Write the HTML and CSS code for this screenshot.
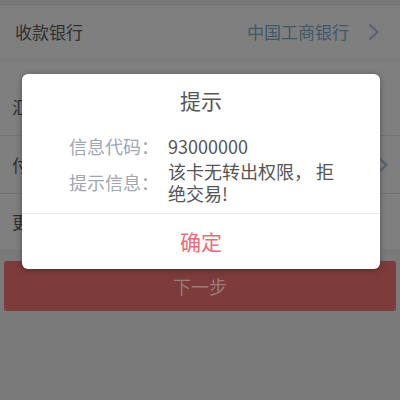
FILE: index.html
```html
<!DOCTYPE html>
<html lang="zh-CN">
<head>
  <meta charset="UTF-8">
  <title>转账</title>
  <link rel="stylesheet" href="styles.css">
</head>
<body>

  <div class="page">
    <div class="top-strip"></div>

    <div class="row row-bank">
      <span class="row-label">收款银行</span>
      <span class="row-value">中国工商银行</span>
      <svg class="chevron" width="12" height="18" viewBox="0 0 12 18">
        <path d="M1.5 1.5 L9.5 9 L1.5 16.5" fill="none" stroke="#56636e" stroke-width="2"/>
      </svg>
    </div>

    <div class="group">
      <div class="row row-amount">
        <span class="row-label">汇款金额</span>
      </div>
      <div class="row row-account">
        <span class="row-label">付款账户</span>
        <svg class="chevron chevron-far" width="12" height="18" viewBox="0 0 12 18">
          <path d="M1.5 1.5 L9.5 9 L1.5 16.5" fill="none" stroke="#56636e" stroke-width="2"/>
        </svg>
      </div>
      <div class="row row-note">
        <span class="row-label">更多信息</span>
      </div>
    </div>

    <div class="btn-next">下一步</div>
  </div>

  <div class="dialog">
    <div class="dialog-title">提示</div>
    <div class="dialog-body">
      <div class="info-row">
        <span class="info-label">信息代码：</span>
        <span class="info-value">93000000</span>
      </div>
      <div class="info-row">
        <span class="info-label">提示信息：</span>
        <span class="info-value">该卡无转出权限， 拒绝交易!</span>
      </div>
    </div>
    <div class="dialog-btn">确定</div>
  </div>

</body>
</html>
```

FILE: styles.css
```css
body {
  margin: 0;
  width: 400px;
  height: 400px;
  overflow: hidden;
  background: #7a7a7a;
  font-family: "Noto Sans CJK SC", "Noto Sans", sans-serif;
  position: relative;
}

.top-strip {
  height: 4px;
  background: #787878;
  border-bottom: 1px solid #717171;
}

.row {
  display: flex;
  align-items: center;
  padding: 0 15px;
  background: #7f7f7f;
  font-size: 17px;
  color: #2f2f2f;
}

.row-bank {
  height: 53px;
  padding-right: 20px;
}

.row-value {
  margin-left: auto;
  color: #3e586a;
}

.chevron {
  margin-left: 19px;
}

.chevron-far {
  margin-left: auto;
  margin-right: -4px;
}

.group {
  margin-top: 4px;
}

.row-amount {
  height: 74px;
  border-bottom: 1px solid #747474;
  padding-top: 16px;
  box-sizing: border-box;
  padding-left: 12px;
}

.row-account {
  height: 57px;
  border-bottom: 1px solid #747474;
  padding-left: 12px;
}

.row-note {
  height: 55px;
  padding-left: 12px;
}

.btn-next {
  margin: 12px 4px 0;
  height: 50px;
  line-height: 50px;
  border-radius: 3px;
  background: #7d3b3b;
  color: #9a7d7d;
  text-align: center;
  font-size: 18px;
}

.dialog {
  position: absolute;
  left: 22px;
  top: 74px;
  width: 358px;
  background: #fff;
  border-radius: 6px;
  box-shadow: 0 1px 6px rgba(0, 0, 0, 0.35);
}

.dialog-title {
  padding-top: 11px;
  line-height: 30px;
  text-align: center;
  font-size: 21px;
  color: #555;
}

.dialog-body {
  padding: 20px 35px 9px 47px;
}

.info-row {
  display: flex;
  align-items: center;
  margin-bottom: 3px;
  font-size: 18px;
  line-height: 22px;
}

.info-row:last-child {
  margin-bottom: 0;
}

.info-label {
  width: 99px;
  flex-shrink: 0;
  color: #9ea7b0;
}

.info-value {
  flex: 1;
  color: #555;
}

.dialog-btn {
  border-top: 1px solid #e8e8e8;
  height: 55px;
  line-height: 55px;
  text-align: center;
  font-size: 21px;
  color: #ee6a76;
}
```
